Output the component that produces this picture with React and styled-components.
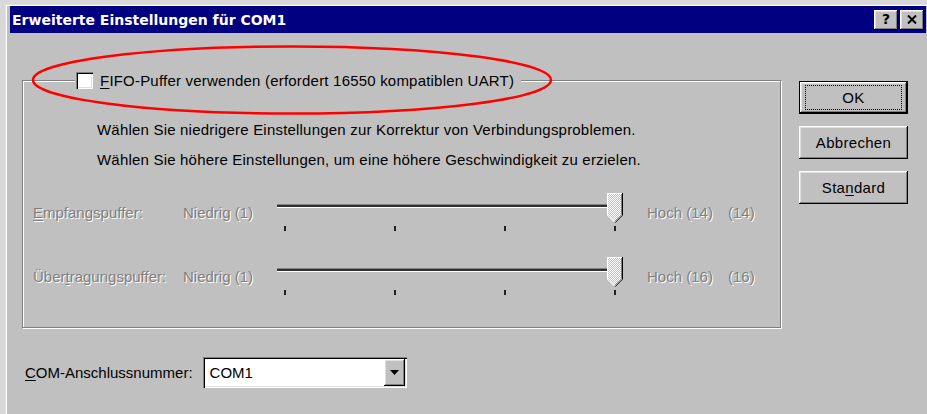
import React from "react";
import styled, { createGlobalStyle, css } from "styled-components";

const GlobalStyle = createGlobalStyle`
  html, body {
    margin: 0;
    padding: 0;
    background: #d8d8d8;
  }
  body {
    font-family: "Liberation Sans", Arial, sans-serif;
    font-size: 15px;
    color: #000;
    overflow: hidden;
  }
`;

const raised = css`
  background: #c0c0c0;
  box-shadow: inset -1px -1px 0 #000, inset 1px 1px 0 #fff,
    inset -2px -2px 0 #808080, inset 2px 2px 0 #dfdfdf;
`;

const sunken = css`
  box-shadow: inset 1px 1px 0 #808080, inset 2px 2px 0 #000,
    inset -1px -1px 0 #fff, inset -2px -2px 0 #dfdfdf;
`;

const Page = styled.div`
  position: relative;
  box-sizing: border-box;
  width: 927px;
  height: 414px;
  padding: 4px 0 0 5px;
  overflow: hidden;
`;

const Window = styled.div`
  box-sizing: border-box;
  width: 922px;
  height: 410px;
  background: #c0c0c0;
  border-top: 1px solid #dfdfdf;
  border-left: 1px solid #dfdfdf;
  box-shadow: inset 1px 1px 0 #fff;
  padding: 1px 1px 0 4px;
  display: flex;
  flex-direction: column;
`;

const TitleBar = styled.div`
  height: 27px;
  background: #000080;
  display: flex;
  align-items: center;
  padding: 0 2px;
  gap: 2px;
`;

const Title = styled.div`
  flex: 1;
  font-family: "DejaVu Sans", Verdana, sans-serif;
  font-weight: bold;
  font-size: 14px;
  color: #fff;
  white-space: nowrap;
`;

const CaptionButton = styled.div`
  ${raised};
  width: 24px;
  height: 20px;
  display: flex;
  align-items: center;
  justify-content: center;
  font-family: "DejaVu Sans", Verdana, sans-serif;
  font-weight: bold;
  font-size: 14px;
  line-height: 1;
  color: #000;
  box-sizing: border-box;
  padding-bottom: 1px;
`;

const MainRow = styled.div`
  display: flex;
  align-items: flex-start;
  margin-top: 37px;
  padding-left: 12px;
`;

const Group = styled.fieldset`
  box-sizing: border-box;
  width: 759px;
  min-width: 0;
  margin: 0;
  padding: 0 0 30px 10px;
  border: 1px solid #808080;
  box-shadow: inset 1px 1px 0 #fff, 1px 1px 0 #fff;
`;

const Legend = styled.legend`
  margin-left: 42px;
  padding: 0 7px 0 1px;
  height: 20px;
  display: flex;
  align-items: center;
  gap: 7px;
  background: #c0c0c0;
  white-space: nowrap;
  letter-spacing: 0.2px;
`;

const CheckBox = styled.span`
  ${sunken};
  display: inline-block;
  width: 17px;
  height: 17px;
  background: #fff;
`;

const Key = styled.span`
  text-decoration: underline;
  text-underline-offset: 2px;
`;

const Notes = styled.div`
  margin-top: 31px;
  padding-left: 64px;
`;

const Note = styled.p`
  margin: 0;
  line-height: 18px;
  white-space: nowrap;
  letter-spacing: 0.2px;
  & + & {
    margin-top: 12px;
  }
`;

const BufferRow = styled.div`
  display: grid;
  grid-template-columns: 150px 94px 370px 81px auto;
  align-items: start;
  margin-top: 24px;
  height: 40px;
`;

const Dim = styled.span`
  padding-top: 11px;
  line-height: 18px;
  color: #808080;
  text-shadow: 1px 1px 0 #fff;
  white-space: nowrap;
`;

const SliderBox = styled.div`
  position: relative;
  width: 346px;
  height: 40px;
`;

const Track = styled.div`
  margin-top: 11px;
  height: 2px;
  background: #303030;
  border-top: 1px solid #808080;
  border-bottom: 1px solid #fff;
`;

const TickRow = styled.div`
  display: flex;
  justify-content: space-between;
  padding: 0 7px;
  margin-top: 18px;
`;

const Tick = styled.span`
  width: 2px;
  height: 5px;
  background: #202020;
`;

const ThumbShape = styled.svg`
  position: absolute;
  top: 0;
  width: 16px;
  height: 30px;
  display: block;
`;

const Buttons = styled.div`
  display: flex;
  flex-direction: column;
  gap: 12px;
  margin-left: 18px;
  margin-top: 11px;
`;

const PushButton = styled.div`
  ${raised};
  position: relative;
  box-sizing: border-box;
  width: 109px;
  height: 33px;
  display: flex;
  align-items: center;
  justify-content: center;
  letter-spacing: 0.3px;
  ${(p) =>
    p.$default &&
    css`
      border: 1px solid #000;
      &::after {
        content: "";
        position: absolute;
        inset: 3px 5px;
        border: 1px dotted #000;
      }
    `}
`;

const PortRow = styled.div`
  display: flex;
  align-items: center;
  gap: 10px;
  margin-top: 29px;
  padding-left: 15px;
`;

const Combo = styled.div`
  ${sunken};
  box-sizing: border-box;
  width: 204px;
  height: 31px;
  background: #fff;
  display: flex;
  align-items: center;
  padding: 2px;
`;

const ComboText = styled.span`
  flex: 1;
  padding-left: 5px;
`;

const DropButton = styled.div`
  ${raised};
  width: 21px;
  height: 100%;
  display: flex;
  align-items: center;
  justify-content: center;
`;

const Marker = styled.svg`
  position: absolute;
  left: 31px;
  top: 44px;
  width: 524px;
  height: 72px;
  pointer-events: none;
`;

function Thumb({ left }) {
  return (
    <ThumbShape viewBox="0 0 16 30" style={{ left }}>
      <defs>
        <pattern id="dither" width="2" height="2" patternUnits="userSpaceOnUse">
          <rect width="2" height="2" fill="#c0c0c0" />
          <rect width="1" height="1" fill="#fff" />
          <rect x="1" y="1" width="1" height="1" fill="#fff" />
        </pattern>
      </defs>
      <polygon points="0,0 16,0 16,22 8,30 0,22" fill="url(#dither)" />
      <path d="M0.5 22 V0.5 H15" stroke="#fff" fill="none" />
      <path d="M0.5 22 L7.5 29" stroke="#fff" fill="none" />
      <path d="M15.5 0 V22.2 L8 29.7" stroke="#000" fill="none" />
      <path d="M14.5 1 V21.8 L8 28.3" stroke="#808080" fill="none" />
    </ThumbShape>
  );
}

function Slider({ value, max, ticks }) {
  const left = 337.5 * ((value - 1) / (max - 1)) - 7.5;
  return (
    <SliderBox>
      <Track />
      <TickRow>
        {Array.from({ length: ticks }, (_, i) => (
          <Tick key={i} />
        ))}
      </TickRow>
      <Thumb left={left} />
    </SliderBox>
  );
}

const buffers = [
  { label: ["", "E", "mpfangspuffer:"], value: 14, max: 14 },
  { label: ["Über", "t", "ragungspuffer:"], value: 16, max: 16 },
];

export default function App() {
  return (
    <>
      <GlobalStyle />
      <Page>
        <Window>
          <TitleBar>
            <Title>Erweiterte Einstellungen für COM1</Title>
            <CaptionButton>?</CaptionButton>
            <CaptionButton>
              <svg width="10" height="9" viewBox="0 0 10 9">
                <path d="M1 0.5 L9 8.5 M9 0.5 L1 8.5" stroke="#000" strokeWidth="2" />
              </svg>
            </CaptionButton>
          </TitleBar>

          <MainRow>
            <Group>
              <Legend>
                <CheckBox />
                <span>
                  <Key>F</Key>IFO-Puffer verwenden (erfordert 16550 kompatiblen UART)
                </span>
              </Legend>
              <Notes>
                <Note>Wählen Sie niedrigere Einstellungen zur Korrektur von Verbindungsproblemen.</Note>
                <Note>Wählen Sie höhere Einstellungen, um eine höhere Geschwindigkeit zu erzielen.</Note>
              </Notes>
              {buffers.map((b) => (
                <BufferRow key={b.max}>
                  <Dim>
                    {b.label[0]}
                    <Key>{b.label[1]}</Key>
                    {b.label[2]}
                  </Dim>
                  <Dim>Niedrig (1)</Dim>
                  <Slider value={b.value} max={b.max} ticks={4} />
                  <Dim>Hoch ({b.max})</Dim>
                  <Dim>({b.value})</Dim>
                </BufferRow>
              ))}
            </Group>

            <Buttons>
              <PushButton $default>OK</PushButton>
              <PushButton>Abbrechen</PushButton>
              <PushButton>
                Sta<Key>n</Key>dard
              </PushButton>
            </Buttons>
          </MainRow>

          <PortRow>
            <span>
              <Key>C</Key>OM-Anschlussnummer:
            </span>
            <Combo>
              <ComboText>COM1</ComboText>
              <DropButton>
                <svg width="9" height="5" viewBox="0 0 9 5">
                  <polygon points="0,0 9,0 4.5,5" fill="#000" />
                </svg>
              </DropButton>
            </Combo>
          </PortRow>
        </Window>

        <Marker viewBox="0 0 524 72">
          <ellipse cx="261" cy="36" rx="259" ry="33.5" fill="none" stroke="#ff0000" strokeWidth="2.5" />
        </Marker>
      </Page>
    </>
  );
}
